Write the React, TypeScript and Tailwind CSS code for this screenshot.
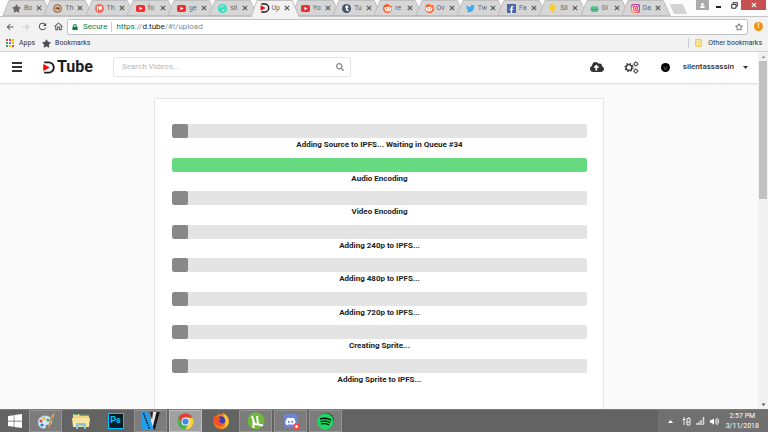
import React from "react";
import { FaSpotify, FaDiscord, FaFacebookF, FaTwitter, FaRedditAlien, FaTumblr, FaPatreon, FaStar, FaRegStar, FaSearch, FaCloudUploadAlt, FaLock, FaUser, FaWindows, FaLightbulb, FaVolumeUp } from "react-icons/fa";
import { MdArrowBack, MdArrowForward, MdRefresh, MdOutlineHome } from "react-icons/md";

const disc = "flex size-[9px] items-center justify-center rounded-full text-white";

function YouTubeIcon() {
  return (
    <svg viewBox="0 0 9 9" className="size-[9px]">
      <rect x="0" y="1" width="9" height="7" rx="1.8" fill="#f22c2c" />
      <path d="M3.5 2.8v3.4l3-1.7z" fill="#fff" />
    </svg>
  );
}

function RedditIcon() {
  return <span className={disc + " bg-[#ff5722]"}><FaRedditAlien size={8} /></span>;
}

function DTubeMark({ className }: { className: string }) {
  return (
    <svg viewBox="0 0 12 13" className={className} aria-hidden="true">
      <path d="M1.2 1.400h4.500a5.100 5.100 0 0 1 0 10.200H1.200" fill="none" stroke="#1b1c1d" strokeWidth="1.9" />
      <path d="M0 2.600v7.800l7.200-3.900z" fill="#f00" stroke="#fff" strokeWidth=".5" />
    </svg>
  );
}

const tabs: { title: string; icon: React.ReactNode; active?: boolean }[] = [
  { title: "Bo", icon: <FaStar size={9} color="#666" /> },
  { title: "Th", icon: <svg viewBox="0 0 9 9" className="size-[9px]"><circle cx="4.5" cy="4.5" r="4" fill="#e3b08b" stroke="#7d6355" /><path d="M2 5l2-2 3 1-1 2-2-1z" fill="#725446" /></svg> },
  { title: "Th", icon: <span className={disc + " bg-[#f96854]"}><FaPatreon size={5} /></span> },
  { title: "fo", icon: <YouTubeIcon /> },
  { title: "ge", icon: <YouTubeIcon /> },
  { title: "sil", icon: <svg viewBox="0 0 9 9" className="size-[9px]"><circle cx="4.5" cy="4.5" r="4.5" fill="#36e0c2" /><path d="M2 3.500q1.500-2 3.500-1.500M4 6.500q2 .5 2.500-1.500" stroke="#fff" strokeWidth=".9" fill="none" /></svg> },
  { title: "Up", icon: <DTubeMark className="size-[10px]" />, active: true },
  { title: "Yo", icon: <YouTubeIcon /> },
  { title: "Tu", icon: <span className={disc + " bg-[#44546b]"}><FaTumblr size={6} /></span> },
  { title: "re", icon: <RedditIcon /> },
  { title: "Ov", icon: <RedditIcon /> },
  { title: "Tw", icon: <FaTwitter size={9} color="#3fa9f5" /> },
  { title: "Fa", icon: <span className="flex size-[9px] items-end justify-center bg-[#4c66a4] text-white"><FaFacebookF size={7} /></span> },
  { title: "Sil", icon: <FaLightbulb size={9} color="#fbc928" /> },
  { title: "Gi", icon: <svg viewBox="0 0 9 9" className="size-[9px]"><path d="M1 3.500l1-2 1 1h3l1-1 1 2 1 2-2 2.500H2L0 5.500z" fill="#58bf92" /><path d="M1 5.500h7" stroke="#3a9c73" strokeWidth=".8" /></svg> },
  { title: "Da", icon: <span className="flex size-[9px] items-center justify-center rounded-[2px] bg-linear-to-tr from-[#fdc04d] via-[#e8356d] to-[#8c3ac4]"><svg viewBox="0 0 9 9" className="size-[9px]"><rect x="1.500" y="1.500" width="6" height="6" rx="1.800" fill="none" stroke="#fff" strokeWidth=".8" /><circle cx="4.500" cy="4.500" r="1.300" fill="none" stroke="#fff" strokeWidth=".8" /></svg></span> },
];

function CloseGlyph({ className }: { className: string }) {
  return (
    <svg viewBox="0 0 6 6" className={className} aria-hidden="true">
      <path d="M.8.8l4.400 4.400M5.200.8L.8 5.200" stroke="currentColor" strokeWidth="1.100" />
    </svg>
  );
}

function TabStrip() {
  return (
    <div className="flex h-4 bg-[#fcfcfc] pl-[5px]">
      <div className="flex flex-1">
        {tabs.map((tab, i) => (
          <div key={i} className={tab.active ? "relative z-10 flex min-w-0 flex-1 items-center pl-[7px]" : "relative flex min-w-0 flex-1 items-center pl-[7px]"}>
            <svg viewBox="0 0 41 16" preserveAspectRatio="none" className="absolute inset-0 h-full w-full overflow-visible" aria-hidden="true">
              <path d={tab.active ? "M-2 17L4 .5H39L46 17" : "M-2 15.500L4 .5H39L46 15.500z"} fill={tab.active ? "#f2f2f2" : "#d6d6d6"} stroke="#b4b4b4" strokeWidth=".8" />
            </svg>
            <span className="relative flex w-[12px] items-center">{tab.icon}</span>
            <span className="relative w-[10px] text-[7px] leading-3 whitespace-nowrap text-[#666]">{tab.title}</span>
            <button aria-label="Close tab" className="relative ml-[2px] text-[#555]"><CloseGlyph className="size-[6px]" /></button>
          </div>
        ))}
      </div>
      <button aria-label="New tab" className="mt-1 ml-[5px] h-[10px] w-[17px]">
        <svg viewBox="0 0 17 10" className="h-[10px] w-[17px]"><path d="M.5.5h12L16.500 9.500H5q-1 0-1.500-1z" fill="#d3d3d3" stroke="#c4c4c4" strokeWidth=".5" /></svg>
      </button>
      <div className="ml-[9px] flex h-[10px] pr-[2px]">
        <button aria-label="Profile" className="flex w-[13px] items-center justify-center bg-[#ababab] text-white"><FaUser size={5} /></button>
        <button aria-label="Minimize" className="flex w-[18px] items-center justify-center pt-1"><span className="h-[2px] w-[5px] bg-[#222]" /></button>
        <button aria-label="Restore" className="flex w-[14px] items-center justify-center">
          <svg viewBox="0 0 7 7" className="size-[7px]"><path d="M2 2V.7h4.300v3.500H5M.7 2.400H5v3.800H.7z" fill="none" stroke="#333" /></svg>
        </button>
        <button aria-label="Close" className="flex w-[25px] items-center justify-center bg-[#c75050] text-white"><CloseGlyph className="size-[6px]" /></button>
      </div>
    </div>
  );
}

function AddressBar() {
  return (
    <div className="flex h-5 items-center border-t border-[#c4c4c4] pr-[5px] pl-[5px] text-[#505050]">
      <button aria-label="Back" className="flex w-4"><MdArrowBack size={10} /></button>
      <button aria-label="Forward" className="flex w-4 text-[#c8c8c8]"><MdArrowForward size={10} /></button>
      <button aria-label="Reload" className="flex w-4"><MdRefresh size={11} /></button>
      <button aria-label="Home" className="flex w-[14px]"><MdOutlineHome size={11} /></button>
      <div className="flex h-4 flex-1 items-center rounded-[2px] border border-[#c4c4c4] bg-white pr-1 pl-1 text-[8px] leading-3">
        <FaLock size={6} color="#0b8043" />
        <span className="ml-[5px] text-[#0b8043]">Secure</span>
        <span className="mx-1 h-[10px] w-px bg-[#ccc]" />
        <a href="#!/upload" className="text-[#888]"><span className="text-[#0b8043]">https</span>://<span className="text-[#222]">d.tube</span>/#!/upload</a>
        <button aria-label="Bookmark this page" className="ml-auto"><FaRegStar size={8} /></button>
      </div>
      <button aria-label="Update available" className="ml-[6px] flex size-[9px] items-center justify-center rounded-full bg-[#f29111] text-[7px] leading-none font-bold text-white">!</button>
    </div>
  );
}

const appDots = ["#ea4335", "#ea4335", "#fbbc05", "#34a853", "#4285f4", "#fbbc05", "#34a853", "#fbbc05", "#ea4335"];

function BookmarksBar() {
  return (
    <div className="flex h-4 items-center border-b border-[#d2d2d2] px-[6px] pb-px text-[7px] leading-3 text-[#333]">
      <a href="#apps" className="flex items-center gap-[5px]">
        <svg viewBox="0 0 8 8" className="size-2">
          {appDots.map((c, i) => <rect key={i} x={(i % 3) * 3} y={Math.floor(i / 3) * 3} width="2" height="2" fill={c} />)}
        </svg>
        Apps
      </a>
      <a href="#bookmarks" className="ml-[7px] flex items-center gap-1"><FaStar size={9} color="#505050" />Bookmarks</a>
      <span className="ml-auto h-[10px] w-px bg-[#ccc]" />
      <button className="ml-[6px] flex items-center gap-[6px]"><span className="h-2 w-[7px] rounded-[1px] border border-[#eccb6c] bg-[#fbdf8c]" />Other bookmarks</button>
    </div>
  );
}

function Gear({ cx, cy, r, w }: { cx: number; cy: number; r: number; w: number }) {
  const toothRadius = r + w * 0.8;
  const step = (2 * Math.PI * toothRadius) / 16;
  return (
    <g fill="none" stroke="#333">
      <circle cx={cx} cy={cy} r={r} strokeWidth={w} />
      <circle cx={cx} cy={cy} r={toothRadius} strokeWidth={w * 0.8} strokeDasharray={`${step} ${step}`} />
    </g>
  );
}

function SiteHeader() {
  return (
    <header className="flex h-8 shrink-0 items-center border-b border-[#dedede] bg-white pr-[10px] pb-px pl-3 text-[#333] shadow-xs">
      <button aria-label="Menu" className="flex w-[10px] flex-col gap-[2px]">
        <span className="h-[2px] w-full bg-[#333]" />
        <span className="h-[2px] w-full bg-[#333]" />
        <span className="h-[2px] w-full bg-[#333]" />
      </button>
      <a href="#!/" className="ml-[21px] flex w-[52px] items-center gap-[2px] text-[16px] leading-5 font-bold text-[#1b1c1d]">
        <DTubeMark className="h-[13px] w-3 shrink-0" />
        Tube
      </a>
      <label className="ml-[18px] flex h-5 w-[238px] items-center rounded-[2px] border border-[#e4e4e4] pr-[6px] pl-2">
        <input type="text" aria-label="Search Videos" placeholder="Search Videos..." className="min-w-0 flex-1 text-[8px] leading-3 outline-none placeholder:text-[#b8b8b8]" />
        <FaSearch size={8} color="#888" />
      </label>
      <div className="ml-auto flex items-center">
        <button aria-label="Upload"><FaCloudUploadAlt size={14} /></button>
        <button aria-label="Settings" className="ml-5">
          <svg viewBox="0 0 15 13" className="h-[13px] w-[15px]">
            <Gear cx={5} cy={6.5} r={2.9} w={1.4} />
            <Gear cx={11.8} cy={3} r={1.6} w={0.9} />
            <Gear cx={11.8} cy={10} r={1.6} w={0.9} />
          </svg>
        </button>
        <button className="ml-[22px] flex items-center text-[8px] leading-3 font-medium">
          <svg viewBox="0 0 9 9" className="size-[9px]"><circle cx="4.500" cy="4.500" r="4.500" fill="#000" /><path d="M2.500 4.200h1.500M5 4.200h1.500M3 6h3" stroke="#999" strokeWidth=".7" /></svg>
          <span className="ml-[13px]">silentassassin</span>
          <svg viewBox="0 0 5 3" className="ml-[9px] h-[3px] w-[5px]"><path d="M0 0h5L2.500 3z" fill="#333" /></svg>
        </button>
      </div>
    </header>
  );
}

const steps = [
  { label: "Adding Source to IPFS... Waiting in Queue #34", done: false },
  { label: "Audio Encoding", done: true },
  { label: "Video Encoding", done: false },
  { label: "Adding 240p to IPFS...", done: false },
  { label: "Adding 480p to IPFS...", done: false },
  { label: "Adding 720p to IPFS...", done: false },
  { label: "Creating Sprite...", done: false },
  { label: "Adding Sprite to IPFS...", done: false },
];

function UploadProgress() {
  return (
    <main className="mx-auto mt-[14px] w-[450px] max-w-full flex-1 border border-b-0 border-[#e6e6e6] bg-white pr-4 pl-[17px] pt-[25px]">
      <div className="grid h-[268px] grid-rows-8">
        {steps.map((step) => (
          <div key={step.label}>
            <div role="progressbar" aria-label={step.label} className="h-[14px] overflow-hidden rounded-[2px] bg-[#e4e4e4]">
              <div className={step.done ? "h-full w-full rounded-[2px] bg-[#66da81]" : "h-full w-4 rounded-[2px] bg-[#888]"} />
            </div>
            <div className="text-center text-[8px] leading-[13px] font-bold text-[#222]">{step.label}</div>
          </div>
        ))}
      </div>
    </main>
  );
}

function Scrollbar() {
  return (
    <div className="flex w-[10px] flex-col items-center bg-[#f1f1f1]" aria-hidden="true">
      <svg viewBox="0 0 9 9" className="size-[9px] shrink-0"><path d="M2.500 6h4l-2-2.500z" fill="#999" /></svg>
      <div className="h-[138px] w-[8px] bg-[#c1c1c1]" />
      <svg viewBox="0 0 9 9" className="mt-auto size-[9px] shrink-0"><path d="M2.500 3.500h4l-2 2.500z" fill="#505050" /></svg>
    </div>
  );
}

const taskIcons: { name: string; state: "idle" | "open" | "front"; icon: React.ReactNode }[] = [
  { name: "Paint", state: "open", icon: <svg viewBox="0 0 18 18" className="size-[18px]"><path d="M1 10C1 5 7 2.500 12 4.500c4 2 4 7.500 1 8.500-2 1-2-1-4 0-1 1 1 3.500-2 3.500-4 0-6-3-6-6.500z" fill="#d3e8f5" stroke="#8fb0c4" strokeWidth=".5" /><circle cx="4" cy="9" r="1.600" fill="#e0483e" /><circle cx="7" cy="6.500" r="1.600" fill="#f5b52e" /><circle cx="11" cy="8" r="1.600" fill="#4aa850" /><circle cx="5" cy="13" r="1.600" fill="#3276c9" /><path d="M15.500 3l-4 13" stroke="#c98446" strokeWidth="1.800" /><path d="M14 4l3.500-3.500-.5 5-2 1z" fill="#d49a58" /></svg> },
  { name: "File Explorer", state: "idle", icon: <svg viewBox="0 0 18 18" className="size-[18px]"><path d="M1 2h6l1 1.500h9V15H1z" fill="#efd680" /><path d="M2 2.500h4M9 3h6" stroke="#5aa46a" strokeWidth="1.200" /><path d="M0 6h18l-1 9H1z" fill="#f8e5a0" /><path d="M4 17v-5q0-1 1-1h8q1 0 1 1v5h-2v-3H6v3z" fill="#8cc4e8" /></svg> },
  { name: "Photoshop", state: "idle", icon: <span className="flex size-4 items-center justify-center border border-[#00c8ff] bg-[#001d26] text-[9px] font-bold text-[#00c8ff]">Ps</span> },
  { name: "Video editor", state: "open", icon: <svg viewBox="0 0 18 18" className="size-[18px]"><path d="M10 0h8l-5 18H7z" fill="#e6e6e6" /><path d="M14.500 0H18l-5 18h-3z" fill="#222" /><path d="M0 0h6l6 18H0z" fill="#249ff0" /><path d="M1.500 1l6 16M16 1l-4 15" stroke="#111" strokeWidth="1.500" strokeDasharray="1.500 1" /><path d="M8 0h3l-1 8z" fill="#222" /></svg> },
  { name: "Chrome", state: "front", icon: <svg viewBox="0 0 18 18" className="size-[17px]"><circle cx="9" cy="9" r="8.500" fill="#4caf50" /><path d="M1.600 4.800A8.500 8.500 0 0 1 16.400 5H9L5.500 11z" fill="#e24235" /><path d="M16.400 5A8.500 8.500 0 0 1 8.500 17.500L12.500 11 9 5z" fill="#fdd23e" /><circle cx="9" cy="9" r="4.200" fill="#fff" /><circle cx="9" cy="9" r="3.300" fill="#4587f0" /></svg> },
  { name: "Firefox", state: "idle", icon: <svg viewBox="0 0 18 18" className="size-[18px]"><circle cx="9" cy="9.500" r="7.500" fill="#ff7a18" /><path d="M11 1q6 3 6 9-1 6-8 7 6-3 4-8-1-3-2-8z" fill="#ffc42b" /><circle cx="9" cy="8.500" r="4.300" fill="#3d3bb1" /><path d="M1.500 4l3 1 2-1 .5 2 2 1-2 2q1 3 5 2-2 4-6 3-5-3-4.500-10z" fill="#f2512c" /></svg> },
  { name: "uTorrent", state: "open", icon: <svg viewBox="0 0 18 18" className="size-[18px]"><circle cx="9" cy="9" r="8.500" fill="#6fb93c" /><path d="M5 4l2 7q1 2 4 1l-1-8M11 11q1 3 5 2M6.500 10v6" fill="none" stroke="#fff" strokeWidth="2" /></svg> },
  { name: "Discord", state: "open", icon: <span className="relative flex size-[14px] items-center justify-center rounded-[2px] bg-[#6e85d2] text-white"><FaDiscord size={11} /><span className="absolute -right-[2px] -bottom-[2px] size-[7px] rounded-full border-2 border-[#f04747] bg-white" /></span> },
  { name: "Spotify", state: "open", icon: <span className="flex size-4 items-center justify-center rounded-full bg-[#111] text-[#1ed760]"><FaSpotify size={17} className="shrink-0" /></span> },
];

const taskStyle = {
  idle: "flex h-[22px] w-[33px] items-center justify-center",
  open: "flex h-[22px] w-[33px] items-center justify-center border border-[#929292] bg-[#7c7c7c]",
  front: "flex h-[22px] w-[33px] items-center justify-center border border-[#bdbdbd] bg-[#a0a0a0]",
};

function Taskbar() {
  return (
    <footer className="flex h-[23px] shrink-0 items-center border-t border-[#7b7b7b] bg-[#636363] text-white">
      <button aria-label="Start" className="flex w-[29px] justify-center"><FaWindows size={16} /></button>
      <div className="flex gap-[2px]">
        {taskIcons.map((t) => <button key={t.name} aria-label={t.name} className={taskStyle[t.state]}>{t.icon}</button>)}
      </div>
      <div className="ml-auto flex h-full items-center bg-[#707070] pr-[9px] pl-[10px]">
        <svg viewBox="0 0 5 3" className="h-[3px] w-[5px]"><path d="M0 3h5L2.500 0z" fill="#fff" /></svg>
        <svg viewBox="0 0 9 9" className="ml-[9px] size-[9px]"><path d="M2 0v8M.5 2.500h3M5 1.500h3v6.500H5zM6 0h1.500M4 5h4" stroke="#eee" fill="none" /></svg>
        <svg viewBox="0 0 9 8" className="ml-[5px] h-2 w-[9px]"><path d="M1 8V6M3 8V5M5 8V3M7.500 8V0" stroke="#ddd" strokeWidth="1.500" /></svg>
        <FaVolumeUp size={9} className="ml-[5px]" />
        <div className="ml-[7px] text-center text-[7px] leading-[10px] whitespace-nowrap"><div>2:57 PM</div><div>3/11/2018</div></div>
      </div>
    </footer>
  );
}

export default function App() {
  return (
    <div className="flex h-screen flex-col overflow-hidden bg-[#f2f2f2] font-['Roboto',sans-serif]">
      <TabStrip />
      <AddressBar />
      <BookmarksBar />
      <div className="flex min-h-0 flex-1">
        <div className="flex min-h-0 flex-1 flex-col overflow-hidden bg-[#fafafa]">
          <SiteHeader />
          <UploadProgress />
        </div>
        <Scrollbar />
      </div>
      <Taskbar />
    </div>
  );
}
